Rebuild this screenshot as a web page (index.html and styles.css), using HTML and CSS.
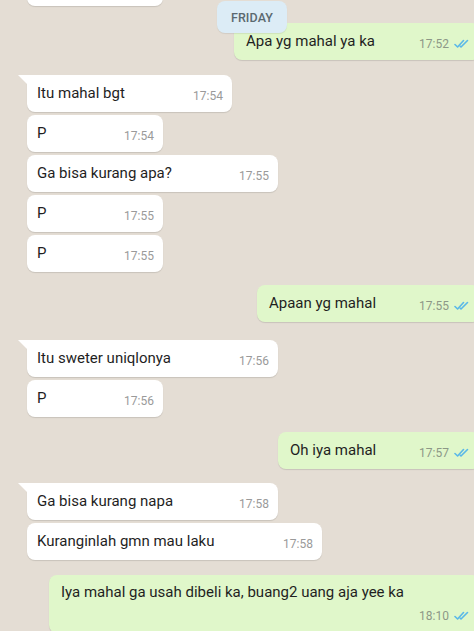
FILE: index.html
```html
<!DOCTYPE html>
<html lang="id">
<head>
<meta charset="utf-8">
<title>Chat</title>
<link rel="stylesheet" href="styles.css">
</head>
<body>
<div class="chat">
  <div class="msg in w-xs top-cut"></div>
  <div class="day">FRIDAY</div>
  <div class="msg out w-o1 after-day"><span class="text">Apa yg mahal ya ka</span><span class="time">17:52<svg class="ticks" viewBox="0 0 16 10"><path d="M1 5.5 L3.6 8 L9.5 1.5"/><path d="M6.2 7.2 L7 8 L13.5 1.5"/></svg></span></div>

  <div class="msg in w-s tail mt-12"><span class="text">Itu mahal bgt</span><span class="time">17:54</span></div>
  <div class="msg in w-xs"><span class="text">P</span><span class="time">17:54</span></div>
  <div class="msg in w-m"><span class="text">Ga bisa kurang apa?</span><span class="time">17:55</span></div>
  <div class="msg in w-xs"><span class="text">P</span><span class="time">17:55</span></div>
  <div class="msg in w-xs"><span class="text">P</span><span class="time">17:55</span></div>

  <div class="msg out w-o2 mt-10"><span class="text">Apaan yg mahal</span><span class="time">17:55<svg class="ticks" viewBox="0 0 16 10"><path d="M1 5.5 L3.6 8 L9.5 1.5"/><path d="M6.2 7.2 L7 8 L13.5 1.5"/></svg></span></div>

  <div class="msg in w-m tail mt-15"><span class="text">Itu sweter uniqlonya</span><span class="time">17:56</span></div>
  <div class="msg in w-xs"><span class="text">P</span><span class="time">17:56</span></div>

  <div class="msg out w-o3 mt-12"><span class="text">Oh iya mahal</span><span class="time">17:57<svg class="ticks" viewBox="0 0 16 10"><path d="M1 5.5 L3.6 8 L9.5 1.5"/><path d="M6.2 7.2 L7 8 L13.5 1.5"/></svg></span></div>

  <div class="msg in w-m tail mt-11"><span class="text">Ga bisa kurang napa</span><span class="time">17:58</span></div>
  <div class="msg in w-l"><span class="text">Kuranginlah gmn mau laku</span><span class="time">17:58</span></div>

  <div class="msg out w-o4 multi mt-12">
    <div class="text">Iya mahal ga usah dibeli ka, buang2 uang aja yee ka</div>
    <div class="time">18:10<svg class="ticks" viewBox="0 0 16 10"><path d="M1 5.5 L3.6 8 L9.5 1.5"/><path d="M6.2 7.2 L7 8 L13.5 1.5"/></svg></div>
  </div>
</div>
</body>
</html>
```
FILE: styles.css
```css
* {
  box-sizing: border-box;
  margin: 0;
  padding: 0;
}

html, body {
  width: 474px;
  height: 631px;
  overflow: hidden;
}

body {
  background: #e4ddd4;
  font-family: Roboto, "Noto Sans", "Liberation Sans", sans-serif;
  color: #1f1f1f;
}

.chat {
  width: 474px;
  height: 631px;
  overflow: hidden;
  display: flex;
  flex-direction: column;
  align-items: flex-start;
  gap: 3px;
  background: #e4ddd4;
}

.chat > * {
  flex-shrink: 0;
}

.msg {
  position: relative;
  display: flex;
  align-items: flex-end;
  justify-content: space-between;
  height: 37px;
  padding: 9px 9px 9px 10px;
  border-radius: 8px;
  box-shadow: 0 1px 1px rgba(0, 0, 0, 0.12);
  font-size: 15px;
  line-height: 19px;
}

.text {
  white-space: nowrap;
}

.time {
  display: flex;
  align-items: center;
  gap: 5px;
  font-size: 12px;
  line-height: 14px;
  color: #9a9a9a;
  white-space: nowrap;
}

.in {
  background: #ffffff;
  margin-left: 27px;
}

.in.tail {
  border-top-left-radius: 0;
}

.in.tail::before {
  content: "";
  position: absolute;
  left: -9px;
  top: 0;
  width: 0;
  height: 0;
  border-top: 9px solid #ffffff;
  border-left: 9px solid transparent;
}

.out {
  background: #e0f7ca;
  align-self: flex-end;
  margin-right: -6px;
  padding-left: 12px;
  padding-right: 10px;
}

.out .time {
  color: #8d9887;
}

.ticks {
  width: 16px;
  height: 10px;
  fill: none;
  stroke: #5ab8e8;
  stroke-width: 1.6;
  stroke-linecap: round;
  stroke-linejoin: round;
}

.top-cut {
  margin-top: -31px;
}

.day {
  position: relative;
  z-index: 1;
  margin-top: -8px;
  margin-left: 217px;
  width: 70px;
  height: 32px;
  border-radius: 8px;
  background: #dcecf6;
  box-shadow: 0 1px 1px rgba(0, 0, 0, 0.08);
  display: flex;
  align-items: center;
  justify-content: center;
  font-size: 12.5px;
  font-weight: 500;
  color: #5b6970;
  letter-spacing: 0.1px;
}

.after-day {
  margin-top: -13px;
}

.multi {
  display: block;
  height: auto;
  padding: 8px 10px 10px 12px;
}

.multi .time {
  justify-content: flex-end;
  margin-top: 7px;
}

.w-xs { width: 136px; }
.w-s  { width: 205px; }
.w-m  { width: 251px; }
.w-l  { width: 295px; }
.w-o1 { width: 246px; }
.w-o2 { width: 223px; }
.w-o3 { width: 202px; }
.w-o4 { width: 431px; }

.mt-10 { margin-top: 10px; }
.mt-11 { margin-top: 11px; }
.mt-12 { margin-top: 12px; }
.mt-15 { margin-top: 15px; }
```
